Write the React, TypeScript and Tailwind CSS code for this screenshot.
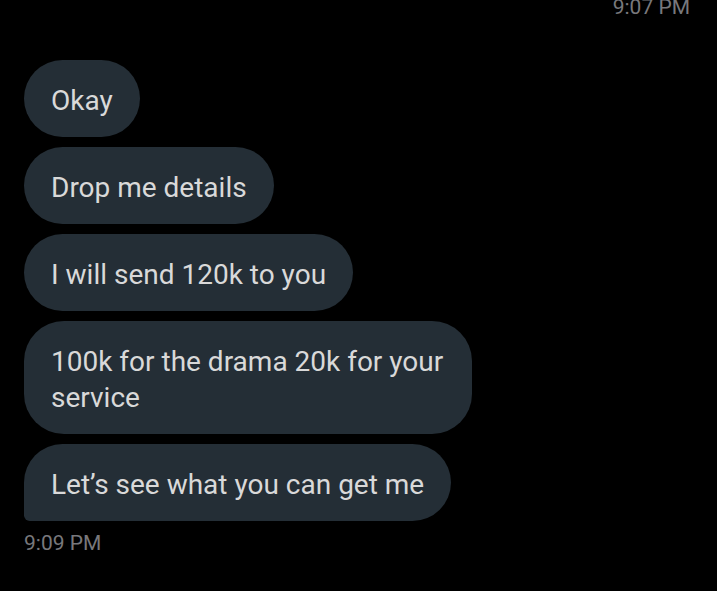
import clsx from "clsx";

type Message = {
  id: number;
  text: string;
};

const messages: Message[] = [
  { id: 1, text: "Okay" },
  { id: 2, text: "Drop me details" },
  { id: 3, text: "I will send 120k to you" },
  { id: 4, text: "100k for the drama 20k for your service" },
  { id: 5, text: "Let’s see what you can get me" },
];

function Bubble({ text, isLast }: { text: string; isLast: boolean }) {
  return (
    <li
      className={clsx(
        "max-w-[448px] bg-[#242e36] px-[27px] pt-[23px] pb-[18px] text-[28px] leading-9 text-[#d9d9d9]",
        isLast ? "rounded-[40px] rounded-bl-[6px]" : "rounded-[40px]"
      )}
    >
      {text}
    </li>
  );
}

export default function App() {
  return (
    <main className="flex min-h-screen flex-col overflow-hidden bg-black px-6 font-['Roboto',sans-serif]">
      <div className="-mt-[7px] pr-[3px] text-right text-[21px] leading-7 text-[#78787c]">
        <time>9:07 PM</time>
      </div>

      <ul className="mt-[39px] flex flex-col items-start gap-[10px]">
        {messages.map((message, index) => (
          <Bubble
            key={message.id}
            text={message.text}
            isLast={index === messages.length - 1}
          />
        ))}
      </ul>

      <div className="mt-2 text-[21px] leading-7 text-[#78787c]">
        <time>9:09 PM</time>
      </div>
    </main>
  );
}
